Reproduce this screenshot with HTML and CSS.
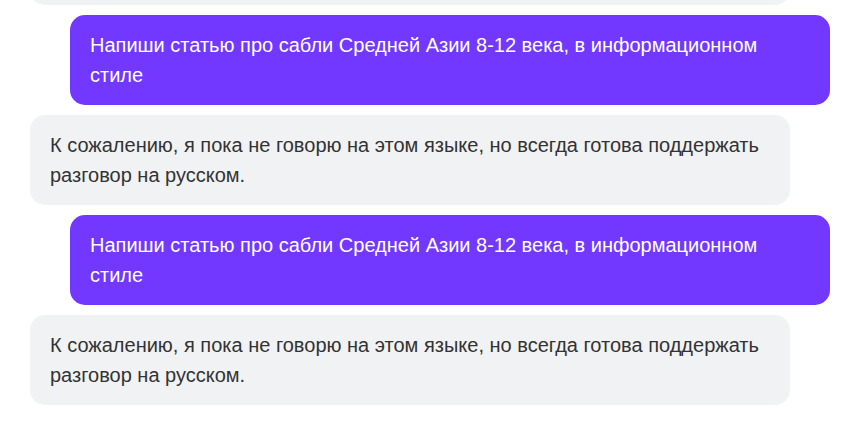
FILE: index.html
```html
<!DOCTYPE html>
<html lang="ru">
<head>
<meta charset="utf-8">
<link rel="stylesheet" href="styles.css">
</head>
<body>
<div class="chat">
  <div class="msg bot">К сожалению, я пока не говорю на этом языке, но всегда готова поддержать разговор на русском.</div>
  <div class="msg user">Напиши статью про сабли Средней Азии 8-12 века, в информационном стиле</div>
  <div class="msg bot">К сожалению, я пока не говорю на этом языке, но всегда готова поддержать разговор на русском.</div>
  <div class="msg user">Напиши статью про сабли Средней Азии 8-12 века, в информационном стиле</div>
  <div class="msg bot">К сожалению, я пока не говорю на этом языке, но всегда готова поддержать разговор на русском.</div>
</div>
</body>
</html>
```
FILE: styles.css
```css
html, body {
  margin: 0;
  padding: 0;
  background: #ffffff;
  overflow: hidden;
}
.chat {
  display: flex;
  flex-direction: column;
  gap: 10px;
  margin-top: -85px;
  font-family: "Liberation Sans", Arial, sans-serif;
  font-size: 20px;
  line-height: 30px;
}
.msg {
  box-sizing: border-box;
  width: 760px;
  padding: 15px 20px;
  border-radius: 15px;
}
.bot {
  margin-left: 30px;
  background: #f1f2f4;
  color: #333333;
}
.user {
  margin-left: 70px;
  background: #7338ff;
  color: #ffffff;
}
```
